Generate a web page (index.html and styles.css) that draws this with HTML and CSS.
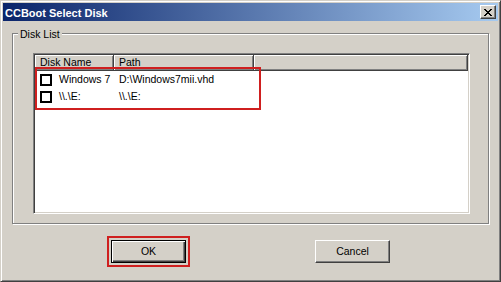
FILE: index.html
```html
<!DOCTYPE html>
<html>
<head>
<meta charset="utf-8">
<link rel="stylesheet" href="styles.css">
</head>
<body>
<div class="window">
  <div class="titlebar">
    <span class="title">CCBoot Select Disk</span>
    <button class="close" aria-label="Close">
      <svg width="8" height="7" viewBox="0 0 8 7" shape-rendering="crispEdges"><path fill="#000" d="M0 0h2v1h-2z M6 0h2v1h-2z M1 1h2v1h-2z M5 1h2v1h-2z M2 2h4v1h-4z M3 3h2v1h-2z M2 4h4v1h-4z M1 5h2v1h-2z M5 5h2v1h-2z M0 6h2v1h-2z M6 6h2v1h-2z"/></svg>
    </button>
  </div>
  <div class="body">
    <div class="group">
      <span class="group-label">Disk List</span>
      <div class="listview">
        <div class="lv-header">
          <div class="hcol c1">Disk Name</div>
          <div class="hcol c2">Path</div>
          <div class="hcol c3"></div>
        </div>
        <div class="row">
          <div class="cell c1"><span class="check"></span>Windows 7</div>
          <div class="cell c2">D:\Windows7mii.vhd</div>
        </div>
        <div class="row">
          <div class="cell c1"><span class="check"></span>\\.\E:</div>
          <div class="cell c2">\\.\E:</div>
        </div>
        <div class="highlight"></div>
      </div>
    </div>
    <div class="buttons">
      <button class="btn default">OK</button>
      <button class="btn">Cancel</button>
    </div>
  </div>
</div>
</body>
</html>
```
FILE: styles.css
```css
html, body {
  margin: 0;
  padding: 0;
  background: #d4d0c8;
}
body {
  font-family: "Liberation Sans", Arial, sans-serif;
  font-size: 10.5px;
  color: #000;
}
.window {
  width: 501px;
  height: 282px;
  box-sizing: border-box;
  border: 1px solid;
  border-color: #d4d0c8 #404040 #404040 #d4d0c8;
  box-shadow: inset 1px 1px #fff, inset -1px -1px #808080;
  padding: 2px;
  background: #d4d0c8;
  display: flex;
  flex-direction: column;
}
.titlebar {
  height: 18px;
  flex: none;
  background: linear-gradient(to right, #0a246a, #a6caf0);
  display: flex;
  align-items: center;
  justify-content: space-between;
  padding: 0 2px;
}
.title {
  color: #fff;
  font-weight: bold;
  font-size: 11px;
  line-height: 18px;
  margin-top: 2px;
}
.close {
  width: 16px;
  height: 14px;
  padding: 0 1px 0 0;
  margin: 0;
  box-sizing: border-box;
  border: 1px solid;
  border-color: #fff #404040 #404040 #fff;
  box-shadow: inset -1px -1px #808080;
  background: #d4d0c8;
  display: flex;
  align-items: center;
  justify-content: center;
}
.close svg {
  display: block;
}
.body {
  flex: 1;
  display: flex;
  flex-direction: column;
}
.group {
  position: relative;
  margin: 12px 0 0 9px;
  width: 477px;
  height: 191px;
  box-sizing: border-box;
  border: 1px solid #808080;
  box-shadow: 1px 1px #fff, inset 1px 1px #fff;
  flex: none;
}
.group-label {
  position: absolute;
  left: 5px;
  top: -6px;
  padding: 0 2px;
  line-height: 13px;
  background: #d4d0c8;
}
.listview {
  position: relative;
  margin: 19px 0 0 20px;
  width: 437px;
  height: 161px;
  box-sizing: border-box;
  border: 1px solid;
  border-color: #808080 #fff #fff #808080;
  padding: 1px;
  box-shadow: inset 1px 1px #404040, inset -1px -1px #d4d0c8;
  background: #fff;
}
.lv-header {
  display: flex;
  height: 16px;
}
.hcol {
  box-sizing: border-box;
  height: 16px;
  background: #d4d0c8;
  border-right: 1px solid #404040;
  border-bottom: 1px solid #404040;
  box-shadow: inset 1px 1px #fff, inset -1px -1px #808080;
  padding-left: 5px;
  line-height: 14px;
  white-space: nowrap;
}
.c1 { width: 79px; flex: none; }
.c2 { width: 140px; flex: none; }
.c3 { flex: 1; }
.row {
  display: flex;
  height: 17px;
}
.cell {
  display: flex;
  align-items: center;
  line-height: 17px;
  white-space: nowrap;
  box-sizing: border-box;
}
.row .c1 {
  padding-left: 5px;
}
.row .c2 {
  padding-left: 5px;
}
.check {
  width: 12px;
  height: 12px;
  box-sizing: border-box;
  border: 2px solid #000;
  background: #fff;
  margin-right: 7px;
  flex: none;
}
.highlight {
  position: absolute;
  left: 1px;
  top: 13px;
  width: 226px;
  height: 43px;
  box-sizing: border-box;
  border: 2px solid #cf1f1f;
}
.buttons {
  display: flex;
  gap: 129px;
  padding-left: 108px;
  margin-top: 16px;
}
.btn {
  width: 75px;
  height: 23px;
  margin: 0;
  padding: 0 0 1px 0;
  box-sizing: border-box;
  font-family: "Liberation Sans", Arial, sans-serif;
  font-size: 10.5px;
  color: #000;
  background: #d4d0c8;
  border: 1px solid;
  border-color: #fff #404040 #404040 #fff;
  box-shadow: inset -1px -1px #808080;
}
.btn.default {
  border: 1px solid #000;
  box-shadow: inset 1px 1px #fff, inset -1px -1px #404040, inset -2px -2px #808080;
  outline: 2px solid #cf1f1f;
  outline-offset: 2px;
}
```
